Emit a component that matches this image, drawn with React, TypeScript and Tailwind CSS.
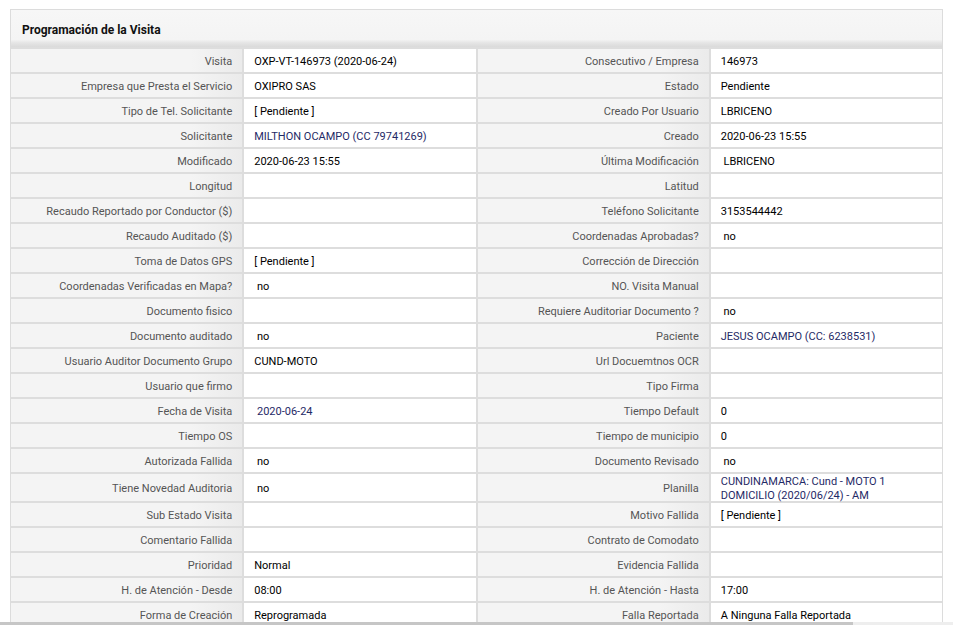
import React from "react";

type Field = { label: string; value?: string; link?: boolean; lines?: string[] };

const rows: [Field, Field][] = [
    [{ label: "Visita", value: "OXP-VT-146973 (2020-06-24)" }, { label: "Consecutivo / Empresa", value: "146973" }],
    [{ label: "Empresa que Presta el Servicio", value: "OXIPRO SAS" }, { label: "Estado", value: "Pendiente" }],
    [{ label: "Tipo de Tel. Solicitante", value: "[ Pendiente ]" }, { label: "Creado Por Usuario", value: "LBRICENO" }],
    [{ label: "Solicitante", value: "MILTHON OCAMPO (CC 79741269)", link: true }, { label: "Creado", value: "2020-06-23 15:55" }],
    [{ label: "Modificado", value: "2020-06-23 15:55" }, { label: "Última Modificación", value: " LBRICENO" }],
    [{ label: "Longitud" }, { label: "Latitud" }],
    [{ label: "Recaudo Reportado por Conductor ($)" }, { label: "Teléfono Solicitante", value: "3153544442" }],
    [{ label: "Recaudo Auditado ($)" }, { label: "Coordenadas Aprobadas?", value: " no" }],
    [{ label: "Toma de Datos GPS", value: "[ Pendiente ]" }, { label: "Corrección de Dirección" }],
    [{ label: "Coordenadas Verificadas en Mapa?", value: " no" }, { label: "NO. Visita Manual" }],
    [{ label: "Documento fisico" }, { label: "Requiere Auditoriar Documento ?", value: " no" }],
    [{ label: "Documento auditado", value: " no" }, { label: "Paciente", value: "JESUS OCAMPO (CC: 6238531)", link: true }],
    [{ label: "Usuario Auditor Documento Grupo", value: "CUND-MOTO" }, { label: "Url Docuemtnos OCR" }],
    [{ label: "Usuario que firmo" }, { label: "Tipo Firma" }],
    [{ label: "Fecha de Visita", value: " 2020-06-24", link: true }, { label: "Tiempo Default", value: "0" }],
    [{ label: "Tiempo OS" }, { label: "Tiempo de municipio", value: "0" }],
    [{ label: "Autorizada Fallida", value: " no" }, { label: "Documento Revisado", value: " no" }],
    [
        { label: "Tiene Novedad Auditoria", value: " no" },
        { label: "Planilla", link: true, lines: ["CUNDINAMARCA: Cund - MOTO 1", "DOMICILIO (2020/06/24) - AM"] },
    ],
    [{ label: "Sub Estado Visita" }, { label: "Motivo Fallida", value: "[ Pendiente ]" }],
    [{ label: "Comentario Fallida" }, { label: "Contrato de Comodato" }],
    [{ label: "Prioridad", value: "Normal" }, { label: "Evidencia Fallida" }],
    [{ label: "H. de Atención - Desde", value: "08:00" }, { label: "H. de Atención - Hasta", value: "17:00" }],
    [{ label: "Forma de Creación", value: "Reprogramada" }, { label: "Falla Reportada", value: "A Ninguna Falla Reportada" }],
];

function Cells({ f }: { f: Field }) {
    return (
        <>
            <div className="min-h-[23px] pt-[2px] flex items-center justify-end pr-[10px] text-right text-[#555] bg-[linear-gradient(to_right,#f4f4f4_0%,#f4f4f4_78%,#ebebeb_100%)]">
                {f.label}
            </div>
            <div className={`min-h-[23px] pt-[2px] flex flex-col justify-center pl-[10px] pr-2 bg-white whitespace-pre ${f.link ? "text-[#1f2a66]" : "text-black"}`}>
                {f.lines ? (
                    <div className="h-[25px] flex flex-col justify-center">
                        {f.lines.map((l) => <span key={l} className="leading-[14px]">{l}</span>)}
                    </div>
                ) : (
                    f.value || ""
                )}
            </div>
        </>
    );
}

export default function App() {
    return (
        <div className="min-h-screen bg-white pt-[9px] pl-[10px] text-[11px] leading-[14px] font-['Roboto',Arial,sans-serif]">
            <div className="w-[933px] border border-[#dcdcdc] bg-white">
                <div className="h-[37px] pt-[2px] flex items-center pl-[11px] font-bold text-[12px] text-[#111] bg-[linear-gradient(to_bottom,#f7f7f7_0%,#f4f4f4_80%,#e6e6e6_88%,#dadada_100%)]">
                    Programación de la Visita
                </div>
                <div className="grid grid-cols-4 gap-[2px] bg-[#dddddd] border-t-2 border-[#dddddd]">
                    {rows.map(([a, b]) => (
                        <React.Fragment key={a.label}>
                            <Cells f={a} />
                            <Cells f={b} />
                        </React.Fragment>
                    ))}
                </div>
            </div>
            <div className="fixed bottom-0 left-0 right-0 h-[3px] bg-[#eeeeee] flex">
                <div className="w-[853px] bg-[#c6c6c6]" />
            </div>
        </div>
    );
}
